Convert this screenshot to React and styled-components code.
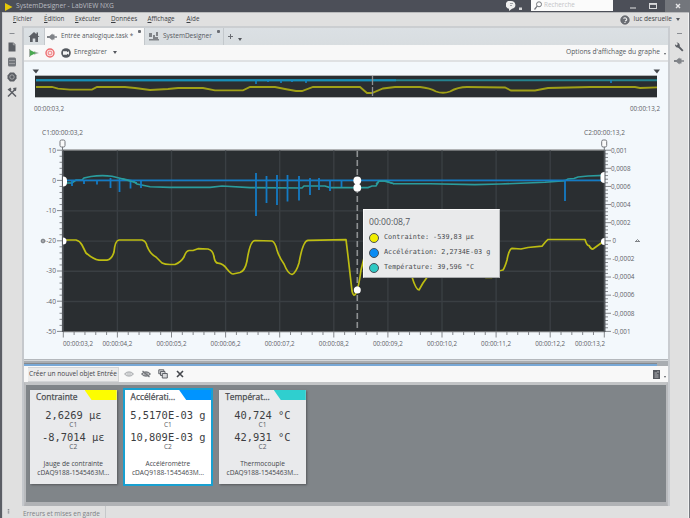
import styled, { createGlobalStyle } from "styled-components";

const GlobalStyle = createGlobalStyle`
	* { box-sizing: border-box; }
	body {
		margin: 0;
		overflow: hidden;
		font-family: "Open Sans", "Noto Sans", sans-serif;
		font-size: 6.5px;
		line-height: 1;
		color: #55585e;
	}
	svg { display: block; flex: none; }
`;

const Window = styled.div`
	width: 690px;
	height: 518px;
	display: flex;
	flex-direction: column;
	background: #e0e0e0;
	border-left: 2px solid #5b5e65;
	border-right: 1px solid #777a80;
	box-shadow: inset 1px 0 0 #cfd0d2, inset -1px 0 0 #f2f2f2;
	white-space: nowrap;
`;

const TitleBar = styled.header`
	height: 12px;
	flex: none;
	display: flex;
	align-items: center;
	margin: 0 -1px 0 -2px;
	padding-left: 5px;
	background: #4c4f58;
	color: #b9bbc0;
`;

const AppTitle = styled.span`
	margin-left: 3px;
	font-size: 6.65px;
	margin-right: auto;
`;

const SearchBox = styled.div`
	width: 82px;
	height: 11px;
	margin: -1px 11px 0 8px;
	padding-left: 3px;
	display: flex;
	align-items: center;
	gap: 2px;
	background: #fbfbfb;
	color: #c4c5c8;
	font-size: 6.3px;
`;

const WinButton = styled.div`
	width: ${(props) => props.$w}px;
	height: 12px;
	display: flex;
	align-items: center;
	justify-content: center;
	background: ${(props) => (props.$close ? "#73767c" : "transparent")};
`;

const MenuBar = styled.nav`
	height: 14px;
	flex: none;
	display: flex;
	align-items: center;
	padding: 0 0 0 11px;
	border-top: 1px solid #b9babc;
	color: #3d3f44;
`;

const MenuItem = styled.span`
	width: ${(props) => props.$w}px;
	font-size: 6.3px;
	&::first-letter { text-decoration: underline; }
`;

const User = styled.div`
	margin-left: auto;
	margin-right: 9px;
	display: flex;
	align-items: center;
	gap: 4px;
	font-size: 6.5px;
`;

const Body = styled.div`
	height: 480px;
	flex: none;
	display: flex;
`;

const Rail = styled.aside`
	width: ${(props) => props.$w}px;
	display: flex;
	flex-direction: column;
	align-items: center;
	padding-top: 7px;
	gap: 5px;
	flex: none;
`;

const Main = styled.main`
	width: 648px;
	flex: none;
	border-left: 2px solid #c5c8cc;
	border-right: 2px solid #c9ccd0;
	border-top: 2px solid #cbced1;
	display: flex;
	flex-direction: column;
	background: #f3f8fc;
`;

const Tabs = styled.div`
	height: 17px;
	flex: none;
	display: flex;
	background: linear-gradient(#dbe0e4, #d8dde0);
`;

const Tab = styled.div`
	width: ${(props) => props.$w}px;
	padding-left: ${(props) => props.$pad}px;
	display: flex;
	align-items: center;
	gap: 4px;
	font-size: ${(props) => props.$size || 6.3}px;
	background: ${(props) => (props.$active ? "#f8f8f8" : "transparent")};
	border-right: 1px solid #c3c8cc;
`;

const TabClose = styled.i`
	width: 3px;
	height: 3px;
	margin: -10px 3px 0 auto;
	background: #6a6d73;
	border-radius: 1px;
`;

const NewTab = styled.div`
	display: flex;
	align-items: center;
	gap: 5px;
	padding-left: 4px;
`;

const Toolbar = styled.div`
	height: ${(props) => props.$h}px;
	flex: none;
	display: flex;
	align-items: center;
	padding: 0 2px 0 5px;
	background: #f8f8f8;
`;

const Divider = styled.div`
	height: 2px;
	flex: none;
	background: #dfe1e3;
`;

const Label = styled.span`
	font-size: 6.4px;
	margin: 0 6px 0 3px;
`;

const Options = styled.div`
	margin-left: auto;
	display: flex;
	align-items: center;
	gap: 4px;
	font-size: 6.7px;
`;

const Caret = styled.i`
	border: ${(props) => props.$s || 2}px solid transparent;
	border-top: ${(props) => (props.$s || 2) * 1.5}px solid #55585e;
	border-bottom: 0;
	margin-top: ${(props) => props.$drop || 0}px;
`;

const GraphArea = styled.section`
	position: relative;
	height: 297px;
	flex: none;
`;

const Tooltip = styled.div`
	position: absolute;
	left: 339px;
	top: 147px;
	width: 137px;
	height: 69px;
	background: #e9eaeb;
	border: 1px solid #fafafa;
	border-bottom-color: #a9abad;
	border-right-color: #b9bbbd;
	padding: 8px 0 0 5px;
`;

const TooltipTime = styled.div`
	font-size: 8.6px;
	height: 12px;
`;

const TooltipRow = styled.div`
	height: 15px;
	display: flex;
	align-items: center;
	gap: 5px;
	font-family: "DejaVu Sans Mono", monospace;
	font-size: 6.8px;
	color: #4a4c50;
`;

const Dot = styled.i`
	width: 10px;
	height: 10px;
	border-radius: 50%;
	border: 1px solid #4a5058;
	background: ${(props) => props.$color};
`;

const Splitter = styled.div`
	height: 7px;
	flex: none;
	background: #b4b8bc;
	padding-top: 1px;
`;

const SplitterGrip = styled.div`
	height: 6px;
	background: #a9adb1;
	border-top: 1px solid #d3d6d9;
`;

const SplitterLine = styled.div`
	height: 3px;
	margin: 2px 11px 0 0;
	border-top: 1px solid #85898e;
	background: #78a8d6;
`;

const CreateButton = styled.div`
	width: 91px;
	height: 15px;
	margin-left: -1px;
	display: flex;
	align-items: center;
	justify-content: center;
	background: #ebebeb;
	border: 1px solid #d3d5d7;
	border-left: 0;
	font-size: 6.55px;
	color: #3f4247;
`;

const IconGroup = styled.div`
	display: flex;
	gap: 7px;
	margin-left: 5px;
`;

const Panel = styled.section`
	flex: 1;
	display: flex;
	align-items: flex-start;
	gap: 4px;
	padding: 3px 0 0 2px;
	background: #808589;
	border: 2px solid #b9bbbe;
	border-top: 3px solid #c2c4c6;
	border-bottom: 4px solid #b0b2b5;
`;

const CardFrame = styled.div`
	border: 2px solid ${(props) => (props.$selected ? "#18a0d0" : "transparent")};
	width: 90.6px;
	height: 98px;
	flex: none;
`;

const CardBody = styled.article`
	height: 94px;
	background: ${(props) => (props.$selected ? "#ffffff" : "#e9eaec")};
	box-shadow: ${(props) => (props.$selected ? "none" : "1px 1px 2px #55585c")};
	display: flex;
	flex-direction: column;
	align-items: center;
`;

const CardHead = styled.div`
	width: 100%;
	height: 11px;
	display: flex;
	justify-content: space-between;
	padding-left: 6px;
	font-size: 8.4px;
	line-height: 13px;
	margin-bottom: 8px;
	color: #4a4c50;
	-webkit-text-stroke: 0.25px #4a4c50;
`;

const Flag = styled.i`
	width: 32px;
	height: 10px;
	background: ${(props) => props.$color};
	clip-path: polygon(0 0, 100% 0, 100% 100%, 7px 100%);
`;

const Value = styled.div`
	height: 12px;
	line-height: 13px;
	font-family: "DejaVu Sans Mono", monospace;
	font-size: 10.4px;
	color: #3c3e42;
`;

const Cursor = styled.div`
	height: ${(props) => (props.$last ? 16.5 : 9.5)}px;
	line-height: 8px;
	font-size: 6.6px;
`;

const Meta = styled.div`
	height: 9px;
	line-height: 9px;
	font-size: 6.6px;
	color: #44464b;
`;

const StatusBar = styled.footer`
	flex: 1;
	display: flex;
	align-items: center;
	color: #7d8084;
`;

const StatusTab = styled.span`
	width: 83px;
	height: 12px;
	margin-left: 11px;
	padding-top: 4px;
	border-right: 1px solid #c6c8ca;
	font-size: 6.45px;
	line-height: 8px;
`;

const YELLOW = "#bdbd12";
const TEAL = "#2a9c9d";
const BLUE = "#147bc4";

const strain = "M63 240H76Q80 241 82 245L86 253Q93 259 99 260.2H107Q112 259 114 252Q115 240.5 119 240H142Q146 241 147 246Q150 254 156 257L162 263Q165 264.5 170 264.5H175Q181 262 184 257Q186 251 189 250.5H193L198 248.7L208 249Q213 250 214 257Q215 263 218 263.2Q223 263.5 227 269Q231 274 233 274L240 272.5Q245 271 247 261Q250 240.5 255 240.5L272 241Q275 242 277 250Q279 257 284 264Q288 274 292 274.5Q296 273 299 263Q303 240.5 308 240.4L346 239.6L348 256L352 291Q353.5 298 356 293Q359 286 361 270L364 258Q368 241 375 240H395Q401 241 404 252L412 277Q416 290 419 290L423 283L428 276Q434 270 438 256Q442 241 448 240H465Q472 242 476 262Q480 277 486 277.5H492Q495 271 503 270Q505 267 507 260Q509 249 512 248.3L521 249L528 247.5L542 246.2Q547 240 548 239.5H585Q587 246 589 245.5Q591 249.5 593 249L604 241";

const temperature = "M63 183H72L76 180H82L84 178L91 176.5Q101 175 112 176.2L121 178.5L133 181L137 184L150 186.8L170 187.4H210L222 186L250 187.6L302 188L304 186H325L330 187.6H368L372 186H376L379 181H384L394 183.8H430L475 184.6L500 184L545 182.3L565 180.6L568 179L574 178.5L578 177L588 176L604 175.4";

const spikes = [
	[72, 180, 186], [84, 180, 184], [97, 180, 184.5], [110.5, 178, 188], [119.5, 179, 192],
	[130.5, 180, 188.5], [141, 180, 188], [256, 173, 216], [266.5, 176, 203], [277, 175, 205],
	[287.5, 175, 201.5], [299, 176, 200.5], [310, 178, 195], [319, 178, 190], [330, 180, 191],
	[341.5, 180, 187], [565, 180, 201],
];

const overviewStrain = "M36 87H52L58 88.7L70 89.6H92L97 87H125L135 88L150 90L168 89L178 88H203L215 90.3H243L250 87H275L285 89L296 91H302L313 87H360L367 93H372L383 88.5L395 87H420Q430 88 436 91.5Q443 94 450 91.5Q458 87 467 87L505 87.5L511 90.5H535L548 88L590 87H635L640 88L657 87.3";

const yLabels = ["10", "0", "-10", "-20", "-30", "-40", "-50"];
const rightLabels = ["0,001", "0,0008", "0,0006", "0,0004", "0,0002", "0", "-0,0002", "-0,0004", "-0,0006", "-0,0008", "-0,001"];
const rightWidths = { 1: 3.5, 5: 16, 6: 19.5, 7: 22 };
const xLabels = ["03", "04", "05", "06", "07", "08", "09", "10", "11", "12", "13"];

const AxisText = styled.text`
	font-family: "Open Sans", sans-serif;
	font-size: 6.7px;
	fill: #5d6066;
`;

const range = (n) => Array.from({ length: n }, (_, i) => i);

const Time = ({ x, y, w = 30, children }) => (
	<AxisText x={x} y={y} textLength={w} lengthAdjust="spacingAndGlyphs">{children}</AxisText>
);

const Overview = () => (
	<svg width="644" height="62" viewBox="24 62 644 62">
		<path d="M32.5 69.5h6.5l-3 4zM653.5 69.5h6.5l-3 4z" fill="#44474c" />
		<rect x="35" y="75" width="622" height="23" fill="#b2b4b6" />
		<rect x="35" y="76" width="622" height="21" fill="#2a2e31" />
		<path d="M36 80.3H657" stroke="#25838f" strokeWidth="2" />
		<path d="M36 80.3H396" stroke="#178fb9" strokeWidth="2" />
		<path d="M256 80v4M268 80v2M281 80v3M292 80v2M306 80v3M611 80v3" stroke="#1687c8" strokeWidth="1.5" />
		<path d={overviewStrain} stroke="#a0a016" strokeWidth="1.8" fill="none" />
		<path d="M372.5 76V97" stroke="#8f9294" strokeWidth="1.3" strokeDasharray="9 2" />
		<Time x={34} y={110.5}>00:00:03,2</Time>
		<Time x={630} y={110.5}>00:00:13,2</Time>
	</svg>
);

const Graph = () => (
	<svg width="644" height="235" viewBox="24 124 644 235">
		<Time x={42} y={135} w={41}>C1:00:00:03,2</Time>
		<Time x={584} y={135} w={41}>C2:00:00:13,2</Time>
		<rect x="63" y="149" width="542" height="183.5" fill="#b2b4b6" />
		<rect x="63" y="150.5" width="541" height="181" fill="#2a2e31" />
		<g stroke="#3a3f43" strokeWidth="1.4">
			{range(9).map((i) => <path key={i} d={`M${117.4 + i * 54.1} 150.5V331`} />)}
			{range(5).map((i) => <path key={i} d={`M63 ${180.7 + i * 30.2}H604`} />)}
		</g>
		<g stroke="#777a7f" strokeWidth="0.9">
			{range(31).map((i) => <path key={i} d={`M${i % 5 ? 59.5 : 57} ${150.2 + i * 6.04}H63`} />)}
			{range(51).map((i) => <path key={i} d={`M${i % 5 ? 608 : 611} ${150.2 + i * 3.624}H604`} />)}
			{range(51).map((i) => <path key={i} d={`M${63.3 + i * 10.82} 332V${i % 5 ? 335 : 337.5}`} />)}
		</g>
		<path d="M62.8 150V332M604.6 150V332" stroke="#55595e" strokeWidth="1.8" />
		{yLabels.map((label, i) => (
			<AxisText key={label} x="56" y={152.5 + i * 30.2} textAnchor="end">{label}</AxisText>
		))}
		{rightLabels.map((label, i) => (
			<AxisText
				key={label}
				x={i >= 5 ? 612.5 : 611}
				y={152.5 + i * 18.12}
				textLength={label === "-0,001" ? 18 : rightWidths[label.length]}
				lengthAdjust="spacingAndGlyphs"
			>
				{label}
			</AxisText>
		))}
		{xLabels.map((label, i) => (
			<Time key={label} x={i === 0 ? 63 : i === 10 ? 575 : 102.4 + (i - 1) * 54.1} y={345.5}>{`00:00:${label},2`}</Time>
		))}
		<path d="M40.5 241H46M43 238.5v5M41.5 239.5h3v3h-3z" stroke="#74777c" strokeWidth="0.8" fill="none" />
		<path d="M635 241.5h5M636 241l1.5-1.5 1.5 1.5" stroke="#74777c" strokeWidth="0.9" fill="none" />
		<path d={temperature} stroke={TEAL} strokeWidth="1.6" fill="none" />
		<path d="M63 180.4H604" stroke={BLUE} strokeWidth="1.7" />
		{spikes.map(([x, top, bottom]) => (
			<path key={x} d={`M${x} ${top}V${bottom}`} stroke={BLUE} strokeWidth="1.8" />
		))}
		<path d="M376 184L379 181H386L394 183.8M121 178.5L137 183" stroke={TEAL} strokeWidth="1.4" fill="none" />
		<path d={strain} stroke={YELLOW} strokeWidth="1.7" fill="none" strokeLinejoin="round" />
		<path d="M357.3 151V331" stroke="#8e9193" strokeWidth="1.6" strokeDasharray="6 3" />
		<g fill="#ffffff">
			<circle cx="357.3" cy="180.5" r="3.9" />
			<circle cx="357.3" cy="187.7" r="3.9" />
			<circle cx="357.3" cy="290" r="3.5" />
			<path d="M63 176.5a4 4 0 0 1 4 4v2a4 4 0 0 1-4 4zM604.5 172a4 4 0 0 0-4 4v3a4 4 0 0 0 4 4zM63 237.5a3.5 3.5 0 0 1 0 7zM604.5 238a3.5 3.5 0 0 0 0 7z" />
		</g>
		<g fill="#fafafa" stroke="#74777c" strokeWidth="1">
			<rect x="60" y="140" width="5" height="7" rx="1.5" />
			<rect x="601.7" y="140" width="5" height="7" rx="1.5" />
		</g>
		<path d="M62.5 147v4M604.3 147v4" stroke="#74777c" />
	</svg>
);

const tooltipRows = [
	{ color: "#f2ee00", text: "Contrainte: -539,83 µε" },
	{ color: "#0a8cf5", text: "Accélération: 2,2734E-03 g" },
	{ color: "#2fc9c4", text: "Température: 39,596 °C" },
];

const cards = [
	{ name: "Contrainte", color: "#fdfd00", c1: "2,6269 µε", c2: "-8,7014 µε", type: "Jauge de contrainte" },
	{ name: "Accélérati...", color: "#0094ff", c1: "5,5170E-03 g", c2: "10,809E-03 g", type: "Accéléromètre", selected: true },
	{ name: "Températ...", color: "#2fcfcf", c1: "40,724 °C", c2: "42,931 °C", type: "Thermocouple" },
];

const SensorCard = ({ card }) => (
	<CardFrame $selected={card.selected}>
		<CardBody $selected={card.selected}>
			<CardHead>
				{card.name}
				<Flag $color={card.color} />
			</CardHead>
			<Value>{card.c1}</Value>
			<Cursor>C1</Cursor>
			<Value>{card.c2}</Value>
			<Cursor $last>C2</Cursor>
			<Meta>{card.type}</Meta>
			<Meta>cDAQ9188-1545463M...</Meta>
		</CardBody>
	</CardFrame>
);

const Plug = () => (
	<svg width="10" height="8" viewBox="0 0 10 8" fill="#808388">
		<path d="M0 3h2.5L5.5.5v7L2.5 5H0zM5.5 1.5h2v1.8H10v1.4H7.5v1.8h-2z" />
	</svg>
);

const Eye = ({ off }) => (
	<svg width="10" height="10" viewBox="0 0 10 10" fill="none" stroke={off ? "#74777c" : "#b4b6b9"}>
		<path d="M.8 5Q5 .8 9.2 5Q5 9.2.8 5z" strokeWidth="1.1" />
		<circle cx="5" cy="5" r="1.3" />
		{off && <path d="M1.5 2l7 6" strokeWidth="1.2" />}
	</svg>
);

const LeftRail = () => (
	<Rail $w={20}>
		<svg width="10" height="4"><path d="M2.5 .5h5" stroke="#8a8d92" /></svg>
		<svg width="10" height="10" viewBox="0 0 10 10"><path d="M1.5.5h5l2 2v7h-7z" fill="#5c5f65" /><path d="M6.3.5v2.3h2.3" stroke="#d0d0d0" fill="none" strokeWidth=".6" /></svg>
		<svg width="10" height="10" viewBox="0 0 10 10"><rect x="1" y=".5" width="8" height="9" rx="1.5" fill="#74777c" /><path d="M2 3.5h6M2 6.5h6" stroke="#a4a6a9" strokeWidth=".8" /></svg>
		<svg width="10" height="10" viewBox="0 0 10 10"><path d="M3 .5h4l2.5 3v3l-2.5 3H3l-2.5-3v-3z" fill="#5c5f65" /><circle cx="5" cy="5" r="2.2" fill="none" stroke="#b5b6b8" strokeWidth=".8" /></svg>
		<svg width="10" height="10" viewBox="0 0 10 10"><path d="M1 9.5l7-7M2 2.5l7 7" stroke="#5c5f65" strokeWidth="1.5" /><path d="M.5 2.5L3.5.5l1 2-2 1.5zM6 1l3.5-.5L9 4 7 3.5z" fill="#5c5f65" /></svg>
	</Rail>
);

const RightRail = () => (
	<Rail $w={18}>
		<svg width="10" height="4"><path d="M3 .5h5" stroke="#8a8d92" /></svg>
		<svg width="10" height="10" viewBox="0 0 10 10"><path d="M3.5 3.5l5.3 5.3" stroke="#5c5f65" strokeWidth="1.9" /><path d="M2.5.5L4 2 2.5 3.5 1 2.2a2.8 2.8 0 0 0 4 3A2.8 2.8 0 0 0 2.5.5z" fill="#5c5f65" /></svg>
		<Plug />
	</Rail>
);

const App = () => (
	<Window>
		<GlobalStyle />
		<TitleBar>
			<svg width="8" height="9" viewBox="0 0 8 9"><path d="M0 1l7.5 4L0 9z" fill="#e4c70a" /></svg>
			<AppTitle>SystemDesigner - LabVIEW NXG</AppTitle>
			<svg width="17" height="10" viewBox="0 0 17 10">
				<path d="M5 0a4.8 4 0 0 1 1 7.8L3 10V7.8A4.3 4 0 0 1 5 0z" fill="#efefef" />
				<path d="M4 2.5h3M4 4.5h2" stroke="#8c8f95" strokeWidth=".8" />
				<rect x="13" y="6.5" width="3" height="2.5" fill="#d5d6d8" />
			</svg>
			<SearchBox>
				<svg width="8" height="9" viewBox="0 0 8 9"><circle cx="5" cy="3.3" r="2.5" fill="none" stroke="#74777c" /><path d="M3.2 5.2L.5 8.5" stroke="#74777c" strokeWidth="1.2" /></svg>
				Recherche
			</SearchBox>
			<WinButton $w={17}><svg width="6" height="8"><path d="M0 6h6" stroke="#b0b2b6" strokeWidth="1.5" /></svg></WinButton>
			<WinButton $w={24}><svg width="8" height="6"><rect x=".5" y=".5" width="7" height="5" fill="none" stroke="#d8d9db" /><path d="M0 1.2h8" stroke="#d8d9db" strokeWidth="1.4" /></svg></WinButton>
			<WinButton $w={25} $close><svg width="6" height="6"><path d="M1 1l4 4M5 1L1 5" stroke="#e6e6e8" strokeWidth="1.4" /></svg></WinButton>
		</TitleBar>
		<MenuBar>
			<MenuItem $w={31}>Fichier</MenuItem>
			<MenuItem $w={31}>Édition</MenuItem>
			<MenuItem $w={36}>Exécuter</MenuItem>
			<MenuItem $w={36.5}>Données</MenuItem>
			<MenuItem $w={39}>Affichage</MenuItem>
			<MenuItem $w={20}>Aide</MenuItem>
			<User>
				<svg width="10" height="10" viewBox="0 0 10 10"><circle cx="5" cy="5" r="4.3" fill="#6c6f75" stroke="#55585e" strokeWidth=".6" /><path d="M3.5 3.5Q5 2 6.3 3.5T5 6M5 7v1" fill="none" stroke="#f4f4f4" strokeWidth="1.1" /></svg>
				luc desruelle
				<Caret />
			</User>
		</MenuBar>
		<Body>
			<LeftRail />
			<Main>
				<Tabs>
					<Tab $w={21} $pad={4}>
						<svg width="12" height="12" viewBox="0 0 12 12"><path d="M6 1l5.5 5H10v5H7.3V7.5H4.7V11H2V6H.5zM8.5 1.5H10v3H8.5z" fill="#5c5f65" /></svg>
					</Tab>
					<Tab $w={100} $active $pad={2}>
						<Plug />
						Entrée analogique.task *
						<TabClose />
					</Tab>
					<Tab $w={79} $pad={4} $size={6.5}>
						<svg width="10" height="9" viewBox="0 0 10 9" fill="#808388"><path d="M0 1h3v4H0zM4 3h2v4H4zM7 0h2v4H7zM0 7h10v1.5H0zM5 5h4v2H5z" /></svg>
						SystemDesigner
						<TabClose />
					</Tab>
					<NewTab>
						<svg width="5" height="5"><path d="M0 2.5h5M2.5 0v5" stroke="#6a6d73" /></svg>
						<Caret $drop={5} />
					</NewTab>
				</Tabs>
				<Toolbar $h={15}>
					<svg width="10" height="10" viewBox="0 0 10 10"><path d="M0 1h1.2v8H0zM5 3.2l5 1.8-5 1.8z" fill="#a5b0a6" /><path d="M1 2l6 3-6 3z" fill="#49a850" /></svg>
					<svg width="22" height="10" viewBox="0 0 22 10"><circle cx="11" cy="5" r="4" fill="#fbe3e3" stroke="#ec6d70" strokeWidth="1.4" /><rect x="9.3" y="3.3" width="3.4" height="3.4" rx="1" fill="none" stroke="#ec6d70" strokeWidth=".9" /></svg>
					<svg width="10" height="10" viewBox="0 0 10 10"><circle cx="5" cy="5" r="4.8" fill="#55595f" /><path d="M2 3.3h4v1l2-1v3.4l-2-1v1H2z" fill="#f4f4f4" /></svg>
					<Label>Enregistrer</Label>
					<Caret $s={2.5} />
					<Options>
						Options d'affichage du graphe
						<Caret $s={1.5} $drop={3} />
					</Options>
				</Toolbar>
				<Divider />
				<GraphArea>
					<Overview />
					<Graph />
					<Tooltip>
						<TooltipTime>00:00:08,7</TooltipTime>
						{tooltipRows.map((row) => (
							<TooltipRow key={row.text}>
								<Dot $color={row.color} />
								{row.text}
							</TooltipRow>
						))}
					</Tooltip>
				</GraphArea>
				<Splitter>
					<SplitterGrip>
						<SplitterLine />
					</SplitterGrip>
				</Splitter>
				<Toolbar $h={16}>
					<CreateButton>Créer un nouvel objet Entrée</CreateButton>
					<IconGroup>
						<Eye />
						<Eye off />
						<svg width="10" height="10" viewBox="0 0 10 10" fill="#d8d9db" stroke="#606369"><path d="M.8.8h5v4h-5z" /><path d="M2.5 2.5h4.5v4H2.5z" /><path d="M4.3 4.5h5v4.5h-5z" /></svg>
						<svg width="10" height="10" viewBox="0 0 10 10"><path d="M2 2l6 6M8 2L2 8" stroke="#44474c" strokeWidth="1.6" /></svg>
					</IconGroup>
					<Options>
						<svg width="7" height="9" viewBox="0 0 7 9"><path d="M0 0h7v9H0z" fill="#55585e" /><path d="M1.5 3h2.5M1.5 5h4M1.5 7h4M5 1v2" stroke="#d8d9db" strokeWidth=".7" /></svg>
						<Caret $s={1.5} $drop={5} />
					</Options>
				</Toolbar>
				<Panel>
					{cards.map((card) => <SensorCard key={card.name} card={card} />)}
				</Panel>
			</Main>
			<RightRail />
		</Body>
		<StatusBar>
			<svg width="10" height="8"><path d="M6.5 1v5" stroke="#8a8d92" strokeWidth="1.5" strokeDasharray="1.5 .8" /></svg>
			<StatusTab>Erreurs et mises en garde</StatusTab>
		</StatusBar>
	</Window>
);

export default App;
